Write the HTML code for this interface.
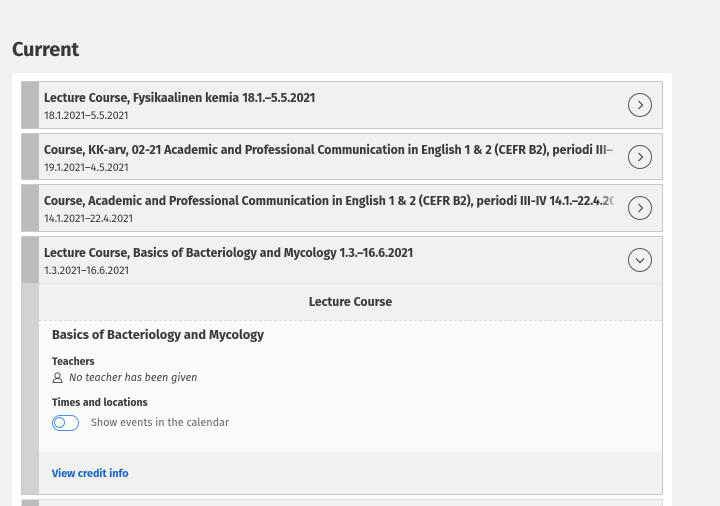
<!DOCTYPE html>
<html style="width:720px;height:506px;overflow:hidden"><head><meta charset="utf-8"><style>
*{margin:0;padding:0;box-sizing:border-box}
body{width:720px;height:506px;overflow:hidden;background:#f1f1f1;font-family:"Fira Sans","Liberation Sans",sans-serif;color:#3a3a3a;position:relative}
h1{position:absolute;left:12px;top:38px;font-size:20px;font-weight:bold;color:#3a3a3a;letter-spacing:-0.2px}
.panel{position:absolute;left:12px;top:73px;width:660px;height:440px;background:#fff;border-radius:3px}
.item{position:absolute;left:21px;width:642px;background:#f1f1f1;border:1px solid #c8c8c8;overflow:hidden}
.bar{position:absolute;left:0;top:0;width:17px;height:100%;background:#bcbcbc}
.t{position:absolute;left:22px;top:9px;font-size:12.3px;font-weight:bold;white-space:nowrap;width:570px;overflow:hidden;color:#3a3a3a;
-webkit-mask-image:linear-gradient(to right,#000 555px,transparent 575px)}
.d{position:absolute;left:22px;top:27px;font-size:11px;color:#3a3a3a}
.c{position:absolute;right:10px;top:11px;width:24px;height:24px;border:1px solid #555;border-radius:50%}
.c svg{position:absolute;left:5px;top:5px}
</style></head><body>
<h1>Current</h1>
<div class="panel"></div>

<div class="item" style="top:81px;height:48px"><div class="bar"></div>
<div class="t">Lecture Course, Fysikaalinen kemia 18.1.–5.5.2021</div><div class="d">18.1.2021–5.5.2021</div>
<div class="c"><svg width="12" height="12"><path d="M4.5 2 L8.5 6 L4.5 10" fill="none" stroke="#444" stroke-width="1.2"/></svg></div></div>

<div class="item" style="top:133px;height:47px"><div class="bar"></div>
<div class="t">Course, KK-arv, 02-21 Academic and Professional Communication in English 1 &amp; 2 (CEFR B2), periodi III–IV</div><div class="d">19.1.2021–4.5.2021</div>
<div class="c"><svg width="12" height="12"><path d="M4.5 2 L8.5 6 L4.5 10" fill="none" stroke="#444" stroke-width="1.2"/></svg></div></div>

<div class="item" style="top:184px;height:48px"><div class="bar"></div>
<div class="t">Course, Academic and Professional Communication in English 1 &amp; 2 (CEFR B2), periodi III-IV 14.1.–22.4.2021</div><div class="d">14.1.2021–22.4.2021</div>
<div class="c"><svg width="12" height="12"><path d="M4.5 2 L8.5 6 L4.5 10" fill="none" stroke="#444" stroke-width="1.2"/></svg></div></div>

<div class="item" style="top:236px;height:259px"><div class="bar" style="height:46px"></div>
<div class="bar" style="top:46px;height:213px;background:#d2d2d2"></div>
<div class="t">Lecture Course, Basics of Bacteriology and Mycology 1.3.–16.6.2021</div><div class="d">1.3.2021–16.6.2021</div>
<div class="c"><svg width="12" height="12"><path d="M2 4.5 L6 8.5 L10 4.5" fill="none" stroke="#444" stroke-width="1.2"/></svg></div>
<div style="position:absolute;left:17px;top:46px;right:0;height:38px;border-top:1px solid #e2e2e2;background:#f1f1f1;border-bottom:1px dashed #ddd">
<div style="text-align:center;font-size:12.3px;font-weight:bold;line-height:37px;color:#3a3a3a">Lecture Course</div></div>
<div style="position:absolute;left:17px;top:84px;right:0;height:131px;background:#fafafa">
<div style="position:absolute;left:13px;top:7px;font-size:12.8px;font-weight:bold;color:#3a3a3a">Basics of Bacteriology and Mycology</div>
<div style="position:absolute;left:13px;top:34px;font-size:10.5px;font-weight:bold">Teachers</div>
<svg style="position:absolute;left:13px;top:51px" width="11" height="11"><circle cx="5.5" cy="3.5" r="2.6" fill="none" stroke="#555"/><path d="M1 10.5 Q1 6.5 5.5 6.5 Q10 6.5 10 10.5 Z" fill="none" stroke="#555"/></svg>
<div style="position:absolute;left:30px;top:50px;font-size:10.8px;font-style:italic;color:#444">No teacher has been given</div>
<div style="position:absolute;left:13px;top:75px;font-size:10.5px;font-weight:bold">Times and locations</div>
<div style="position:absolute;left:13px;top:94px;width:27px;height:16px;border:1.5px solid #4a90d9;border-radius:8px;background:#fff"><div style="position:absolute;left:1px;top:1px;width:11px;height:11px;border-radius:50%;border:1px solid #4a90d9"></div></div>
<div style="position:absolute;left:52px;top:95px;font-size:10.8px;color:#666">Show events in the calendar</div>
</div>
<div style="position:absolute;left:17px;top:215px;right:0;height:44px;background:#f1f1f1">
<div style="position:absolute;left:13px;top:15px;font-size:10.8px;font-weight:bold;color:#1a66c2">View credit info</div></div>
</div>

<div class="item" style="top:499px;height:30px;border-color:#ddd"><div class="bar"></div></div>
</body></html>
